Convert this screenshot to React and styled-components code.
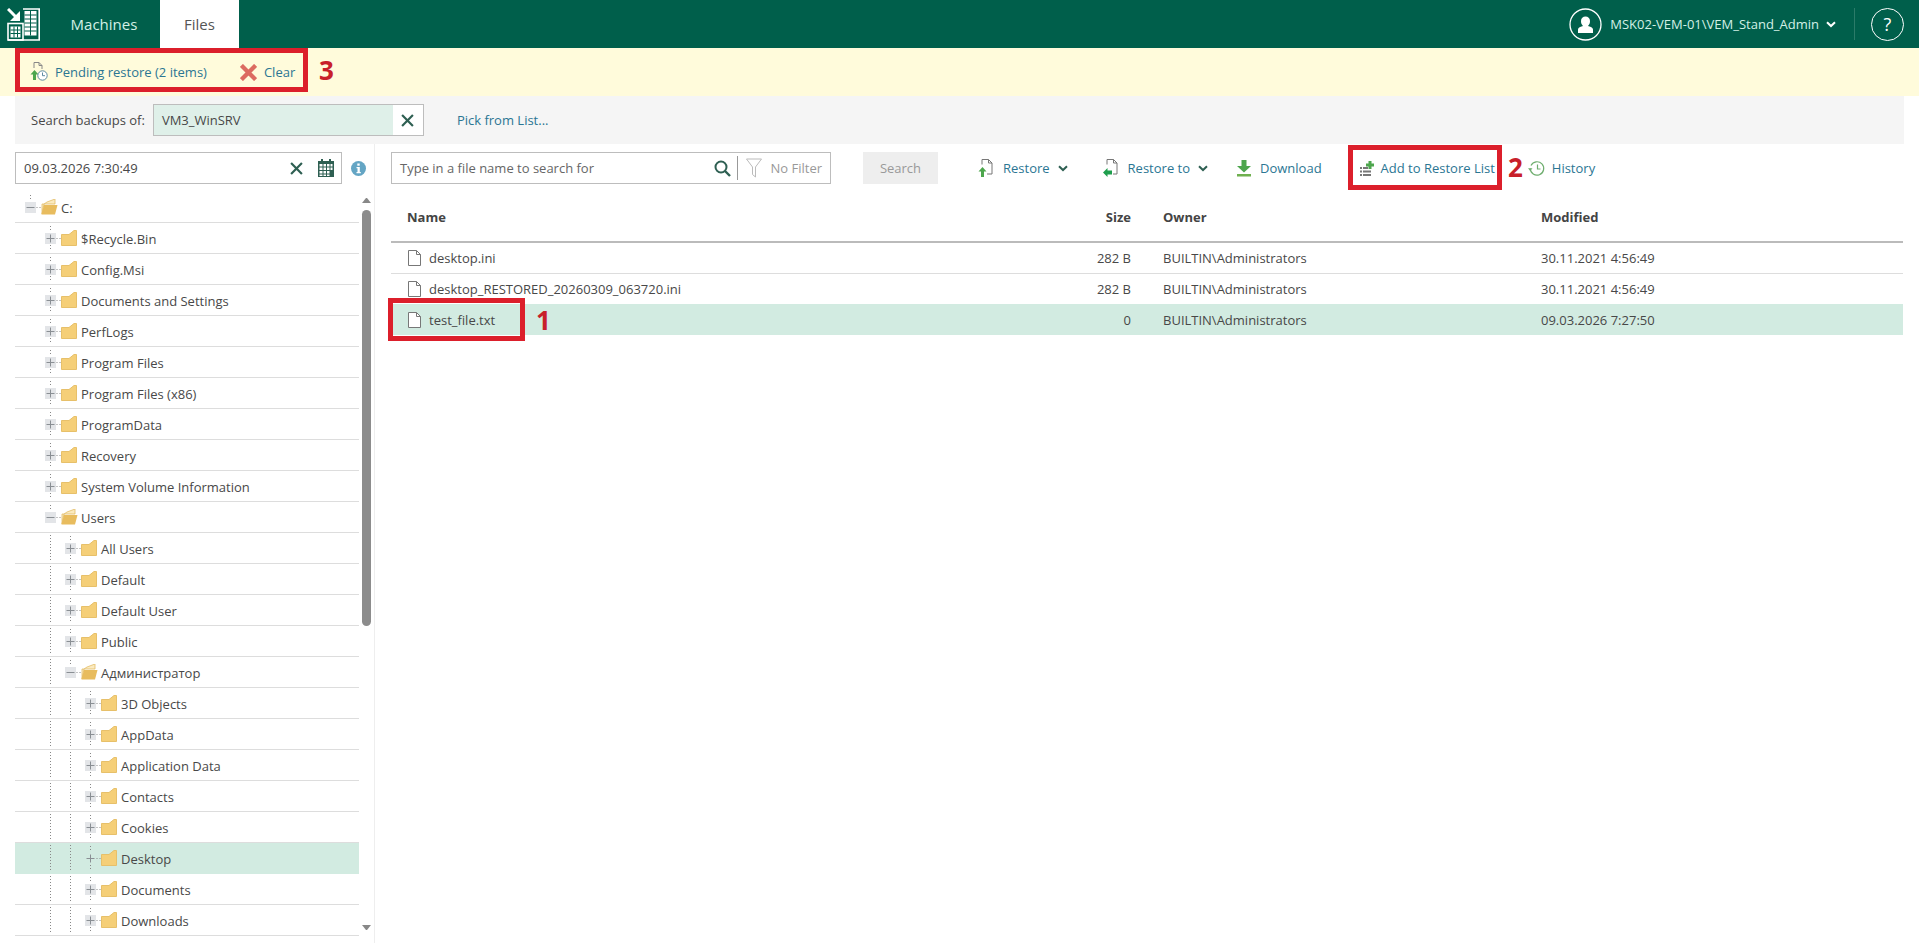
import React from 'react'
import styled, { createGlobalStyle } from 'styled-components'

const GlobalStyle = createGlobalStyle`
  html, body { margin: 0; padding: 0; background: #fff; overflow: hidden; }
  * { box-sizing: border-box; }
  body { font-family: "Open Sans", "Liberation Sans", sans-serif; font-size: 13px; color: #484848; }
`

const treeRows = [
  { name: 'C:', depth: 0, open: true },
  { name: '$Recycle.Bin', depth: 1 },
  { name: 'Config.Msi', depth: 1 },
  { name: 'Documents and Settings', depth: 1 },
  { name: 'PerfLogs', depth: 1 },
  { name: 'Program Files', depth: 1 },
  { name: 'Program Files (x86)', depth: 1 },
  { name: 'ProgramData', depth: 1 },
  { name: 'Recovery', depth: 1 },
  { name: 'System Volume Information', depth: 1 },
  { name: 'Users', depth: 1, open: true },
  { name: 'All Users', depth: 2 },
  { name: 'Default', depth: 2 },
  { name: 'Default User', depth: 2 },
  { name: 'Public', depth: 2 },
  { name: 'Администратор', depth: 2, open: true },
  { name: '3D Objects', depth: 3 },
  { name: 'AppData', depth: 3 },
  { name: 'Application Data', depth: 3 },
  { name: 'Contacts', depth: 3 },
  { name: 'Cookies', depth: 3 },
  { name: 'Desktop', depth: 3, selected: true },
  { name: 'Documents', depth: 3 },
  { name: 'Downloads', depth: 3 },
]

const files = [
  { name: 'desktop.ini', size: '282 B', owner: 'BUILTIN\\Administrators', modified: '30.11.2021 4:56:49' },
  { name: 'desktop_RESTORED_20260309_063720.ini', size: '282 B', owner: 'BUILTIN\\Administrators', modified: '30.11.2021 4:56:49' },
  { name: 'test_file.txt', size: '0', owner: 'BUILTIN\\Administrators', modified: '09.03.2026 7:27:50', selected: true },
]

/* icons */
const Logo = () => (
  <svg width="33" height="33" viewBox="0 0 33 33" fill="none" stroke="#fff">
    <path d="M1 1l10 10" strokeWidth="3" />
    <path d="M13 3v10H3z" fill="#fff" stroke="none" />
    <path d="M16 1h16.200v31H1" strokeWidth="1.600" />
    <rect x="17.500" y="3" width="12" height="24.500" fill="#fff" stroke="none" />
    <path d="M17.500 7h12M17.500 11h12M17.500 15h12M17.500 19h12M17.500 23h12M23.500 3v24.500" stroke="#005f4b" />
    <rect x="1" y="15.500" width="15" height="16.500" stroke="#fff" strokeWidth="1.600" />
    <rect x="3.500" y="18.500" width="10" height="11" fill="#fff" stroke="none" />
    <path d="M3.500 22h10M3.500 25.500h10M7 18.500v11M10.500 18.500v11" stroke="#005f4b" />
  </svg>
)

const Chevron = ({ color = '#2e5f52' }) => (
  <svg width="10" height="7" viewBox="0 0 10 7" fill="none">
    <path d="M1 1.200 5 5l4-3.800" stroke={color} strokeWidth="2" />
  </svg>
)

const UserIcon = () => (
  <svg width="33" height="33" viewBox="0 0 33 33" fill="none">
    <circle cx="16.500" cy="16.500" r="15.500" stroke="#fff" strokeWidth="1.300" />
    <path d="M9 25v-3.500c0-1.500 1.500-2.500 5-3.500-1.500-1.500-2-3-2-5 0-3 2-4.500 4.500-4.500S21 10 21 13c0 2-.5 3.500-2 5 3.500 1 5 2 5 3.500V25z" fill="#fff" />
  </svg>
)

const CloseIcon = ({ size = 12, color = '#2e5f52', width = 2 }) => (
  <svg width={size} height={size} viewBox="0 0 12 12" fill="none">
    <path d="M1 1l10 10M11 1 1 11" stroke={color} strokeWidth={width} />
  </svg>
)

const PageOutline = ({ stroke = '#777', d = 'M3.500 10V.500h7l3 3v11H8' }) => (
  <path d={d} fill="none" stroke={stroke} />
)

const PendingIcon = () => (
  <svg width="18" height="20" viewBox="0 0 18 20" fill="none">
    <path d="M4 6V.500h5l3 3V7M9 .500v3h3" stroke="#888" />
    <path d="M4.500 8 .500 12.500H3V18h3v-5.500h2.500z" fill="#4da64d" />
    <circle cx="12.500" cy="13.500" r="4.700" fill="#fff" stroke="#5c8aa0" />
    <path d="M12.500 10.500v3.200h2.500" stroke="#5c8aa0" />
  </svg>
)

const RestoreIcon = () => (
  <svg width="16" height="18" viewBox="0 0 16 18">
    <PageOutline d="M4 5.500V.500h6.500l3.500 3.500v11H9M10.500.500V4H14" />
    <path d="M4.500 8 .500 12.500h2.500V18h3v-5.500h2.500z" fill="#4da64d" />
  </svg>
)

const RestoreToIcon = () => (
  <svg width="16" height="18" viewBox="0 0 16 18">
    <PageOutline d="M4 5.500V.500h6.500l3.500 3.500v11H10M10.500.500V4H14" />
    <path d="M0 13.500 4.500 9v2.500H9v4H4.500V18z" fill="#1f9e4d" />
  </svg>
)

const DownloadIcon = () => (
  <svg width="16" height="18" viewBox="0 0 16 18">
    <path d="M5.500 1h5v6h4.500L8 13.500 1 7h4.500z" fill="#4da64d" />
    <rect x="1" y="15" width="14" height="2.500" fill="#6fb04f" />
  </svg>
)

const AddListIcon = () => (
  <svg width="15" height="15" viewBox="0 0 15 15">
    <path d="M1 6h2v2H1zM1 9.500h2v2H1zM1 13h2v2H1zM4 6h5v2H4zM4 9.500h8v2H4zM4 13h8v2H4z" fill="#777" />
    <path d="M9.500 0h3v2.500H15v3h-2.500V8h-3V5.500H7v-3h2.500z" fill="#4da64d" />
  </svg>
)

const HistoryIcon = () => (
  <svg width="17" height="17" viewBox="0 0 17 17" fill="none">
    <path d="M3 5.500a6.700 6.700 0 1 1-.700 3" stroke="#6fae6f" strokeWidth="1.200" />
    <path d="M0 8.300h4.500L2.200 11z" fill="#6fae6f" />
    <path d="M9.500 4.500v4.500h3" stroke="#6fae6f" strokeWidth="1.200" />
  </svg>
)

const SearchIcon = () => (
  <svg width="17" height="17" viewBox="0 0 17 17" fill="none">
    <circle cx="7" cy="7" r="5.500" stroke="#2e5f52" strokeWidth="2" />
    <path d="M11 11l5 5" stroke="#2e5f52" strokeWidth="2.400" />
  </svg>
)

const FunnelIcon = () => (
  <svg width="16" height="20" viewBox="0 0 16 20" fill="none">
    <path d="M.500 1h15L9.500 9v10l-3-2.500V9z" stroke="#bbb" />
  </svg>
)

const CalendarIcon = () => (
  <svg width="16" height="18" viewBox="0 0 16 18">
    <path d="M3 0h2v3H3zM11 0h2v3h-2z" fill="#2e5f52" />
    <path d="M0 2h16v16H0z" fill="#2e5f52" />
    <path d="M1.500 5h3v2.500h-3zM5.500 5h2.500v2.500H5.500zM9 5h2.500v2.500H9zM12.500 5h2v2.500h-2zM1.500 8.500h3V11h-3zM5.500 8.500h2.500V11H5.500zM9 8.500h2.500V11H9zM12.500 8.500h2V11h-2zM1.500 12h3v2.500h-3zM5.500 12h2.500v2.500H5.500zM9 12h2.500v2.500H9zM1.500 15.500h3v1.500h-3zM5.500 15.500h2.500v1.500H5.500zM9 15.500h2.500v1.500H9z" fill="#fff" />
  </svg>
)

const InfoIcon = () => (
  <svg width="15" height="15" viewBox="0 0 15 15">
    <circle cx="7.500" cy="7.500" r="7.500" fill="#64a5c4" />
    <rect x="6.300" y="2.500" width="2.400" height="2.200" fill="#fff" />
    <path d="M5.500 6h3.300v5h1v1.300H5.500V11h1V7.300h-1z" fill="#fff" />
  </svg>
)

const FileIcon = () => (
  <svg width="13" height="16" viewBox="0 0 13 16" fill="none">
    <path d="M.500.500h8l4 4v11H.500z" stroke="#777" fill="#fff" />
    <path d="M8.500.500v4h4" stroke="#777" />
  </svg>
)

const Expander = ({ open, selected }) => (
  <svg width="16" height="27" viewBox="0 0 16 27" fill="none">
    {!selected && <rect x="0" y="8" width="11" height="11" fill="#e3e5e8" />}
    <path d="M5.500 1v6M11.500 13.500H16" stroke="#888" strokeDasharray="1 2" />
    {!open && <path d="M5.500 20v6" stroke="#888" strokeDasharray="1 2" />}
    <path d={open ? 'M1.500 13.500h8' : 'M1.500 13.500h8M5.500 9.500v8'} stroke="#8a8f94" />
  </svg>
)

const Folder = ({ open }) =>
  open ? (
    <svg width="17" height="16" viewBox="0 0 17 16">
      <path d="M1 15V5h2l3-2 8-3v5H3z" fill="#fbeabf" stroke="#e2bd68" strokeWidth=".8" />
      <path d="M.500 15.500 3 6h13.500L14 15.500z" fill="#e8bc5e" />
    </svg>
  ) : (
    <svg width="16" height="16" viewBox="0 0 16 16">
      <path d="M.500 15.500V4.500H8L13 .500h2.500v15z" fill="#f5cf78" stroke="#e7c06a" />
    </svg>
  )

/* layout */
const Page = styled.div`
  position: relative;
  width: 1919px;
  height: 943px;
  overflow: hidden;
  background: #fff;
`

const TopBar = styled.header`
  display: flex;
  align-items: stretch;
  height: 48px;
  background: #005f4b;
  padding-left: 7px;
`

const LogoBox = styled.div`
  display: flex;
  align-items: center;
  width: 47px;
`

const Tab = styled.div`
  display: flex;
  align-items: center;
  justify-content: center;
  width: ${(p) => p.$width}px;
  margin-left: ${(p) => p.$ml || 0}px;
  font-size: 15px;
  color: ${(p) => (p.$active ? '#555' : '#d3f0e6')};
  background: ${(p) => (p.$active ? '#fff' : 'transparent')};
`

const UserArea = styled.div`
  display: flex;
  align-items: center;
  margin-left: auto;
  padding-right: 15px;
  color: #d3f0e6;
  font-size: 13px;
`

const UserName = styled.span`
  margin: 0 7px 0 8px;
  white-space: nowrap;
`

const HeaderDivider = styled.div`
  width: 1px;
  height: 32px;
  background: #2b7b69;
  margin: 0 16px 0 18px;
`

const HelpCircle = styled.div`
  display: flex;
  align-items: center;
  justify-content: center;
  width: 33px;
  height: 33px;
  border: 1.300px solid #fff;
  border-radius: 50%;
  color: #fff;
  font-size: 18px;
`

const PendingBar = styled.div`
  display: flex;
  align-items: center;
  height: 48px;
  padding: 0 0 0 30px;
  background: #fffbdb;
`

const LinkText = styled.span`
  color: #2b7693;
  white-space: nowrap;
`

const PendingLink = styled.div`
  display: flex;
  align-items: center;
  gap: ${(p) => p.$gap}px;
  margin-left: ${(p) => p.$ml || 0}px;
`

const SearchStrip = styled.div`
  display: flex;
  align-items: center;
  height: 48px;
  margin: 0 15px;
  padding: 0 0 0 16px;
  background: #f5f5f5;
`

const StripLabel = styled.span`
  margin-right: 8px;
  white-space: nowrap;
`

const SelectedInput = styled.div`
  display: flex;
  width: 271px;
  height: 32px;
  border: 1px solid #bdbdbd;
  background: #fff;
  margin-right: 33px;
`

const SelectedValue = styled.div`
  flex: 1;
  display: flex;
  align-items: center;
  padding-left: 8px;
  background: #dff0e9;
`

const ClearBox = styled.div`
  display: flex;
  align-items: center;
  justify-content: center;
  width: 30px;
`

const Body = styled.div`
  display: flex;
  padding-left: 15px;
`

const Sidebar = styled.aside`
  width: 360px;
  height: 799px;
  border-right: 1px solid #eee;
  overflow: hidden;
`

const DateRow = styled.div`
  display: flex;
  align-items: center;
  padding-top: 8px;
`

const TextField = styled.div`
  display: flex;
  align-items: center;
  width: ${(p) => p.$width}px;
  height: 32px;
  border: 1px solid #bdbdbd;
  background: #fff;
  padding-left: 8px;
`

const DateValue = styled.span`
  flex: 1;
`

const DateAction = styled.span`
  display: flex;
  align-items: center;
  margin-right: ${(p) => p.$mr}px;
`

const InfoBox = styled.span`
  display: flex;
  margin-left: 9px;
`

const TreeWrap = styled.div`
  display: flex;
  padding-top: 8px;
`

const Tree = styled.div`
  width: 344px;
`

const TreeRow = styled.div`
  display: flex;
  align-items: stretch;
  height: 31px;
  padding-left: 10px;
  border-bottom: 1px solid #ddd;
  background: ${(p) => (p.$selected ? '#d2ebe1' : 'transparent')};
  ${(p) => p.$selected && 'border-bottom-color: #d2ebe1;'}
`

const Indent = styled.span`
  flex: none;
  width: 20px;
  margin: 2px 0;
  ${(p) => p.$guide && 'background: repeating-linear-gradient(to bottom, #888 0 1px, transparent 1px 3px) 5px 0 / 1px 100% no-repeat;'}
`

const Node = styled.span`
  display: flex;
  align-items: center;
  gap: 0;
`

const NodeLabel = styled.span`
  margin-left: ${(p) => (p.$open ? 3 : 4)}px;
  padding-top: 1px;
  white-space: nowrap;
`

const ScrollTrack = styled.div`
  display: flex;
  flex-direction: column;
  align-items: center;
  width: 9px;
  margin-left: 3px;
`

const ArrowUp = styled.div`
  flex: none;
  width: 9px;
  height: 5px;
  margin-top: 6px;
  border-left: 4.500px solid transparent;
  border-right: 4.500px solid transparent;
  border-bottom: 5px solid #888;
`

const ArrowDown = styled.div`
  flex: none;
  width: 9px;
  height: 5px;
  margin-top: 299px;
  border-left: 4.500px solid transparent;
  border-right: 4.500px solid transparent;
  border-top: 5px solid #888;
`

const Thumb = styled.div`
  flex: none;
  width: 9px;
  height: 416px;
  margin-top: 7px;
  border-radius: 5px;
  background: #8c8c8c;
`

const Main = styled.main`
  width: 1528px;
  padding-left: 16px;
`

const Toolbar = styled.div`
  display: flex;
  align-items: center;
  padding-top: 8px;
`

const SearchField = styled(TextField)`
  padding-right: 8px;
`

const Placeholder = styled.span`
  flex: 1;
  color: #666;
`

const FieldDivider = styled.span`
  width: 1px;
  height: 24px;
  margin: 0 8px 0 6px;
  background: #999;
`

const FilterText = styled.span`
  margin-left: 8px;
  color: #999;
  white-space: nowrap;
`

const SearchButton = styled.div`
  display: flex;
  align-items: center;
  justify-content: center;
  width: 75px;
  height: 32px;
  margin-left: 32px;
  background: #eee;
  color: #999;
`

const ToolButton = styled.div`
  display: flex;
  align-items: center;
  margin-left: ${(p) => p.$ml}px;
`

const ToolLabel = styled(LinkText)`
  margin-left: ${(p) => p.$gap}px;
`

const ChevronBox = styled.span`
  display: flex;
  margin-left: 8px;
`

const Grid = styled.div`
  display: grid;
  grid-template-columns: 640px 100px 410px 1fr;
  align-items: center;
`

const HeadRow = styled(Grid)`
  height: 59px;
  padding-top: 8px;
  border-bottom: 2px solid #bbb;
  font-weight: 700;
  color: #444;
`

const FileRow = styled(Grid)`
  height: 31px;
  border-bottom: 1px solid ${(p) => (p.$selected ? '#d2ebe1' : '#ddd')};
  background: ${(p) => (p.$selected ? '#d2ebe1' : 'transparent')};
  margin-top: ${(p) => (p.$selected ? -1 : 0)}px;
  padding-top: ${(p) => (p.$selected ? 2 : 0)}px;
`

const NameCell = styled.div`
  display: flex;
  align-items: center;
  gap: 8px;
  padding-left: ${(p) => p.$pad}px;
  white-space: nowrap;
`

const SizeCell = styled.div`
  text-align: right;
`

const OwnerCell = styled.div`
  padding-left: 32px;
`

/* red marks drawn over the screenshot */
const MarkBox = styled.div`
  position: absolute;
  left: ${(p) => p.$x}px;
  top: ${(p) => p.$y}px;
  width: ${(p) => p.$w}px;
  height: ${(p) => p.$h}px;
  border: 5px solid #dc1f2b;
`

const MarkNumber = styled.span`
  position: absolute;
  left: ${(p) => p.$x}px;
  top: ${(p) => p.$y}px;
  font-size: 26px;
  line-height: 30px;
  font-weight: 700;
  color: #c8202a;
`

function guidesFor(depth) {
  const cells = []
  for (let i = 0; i < depth; i++) cells.push(i > 0)
  return cells
}

export default function App() {
  return (
    <Page>
      <GlobalStyle />
      <TopBar>
        <LogoBox><Logo /></LogoBox>
        <Tab $width={100}>Machines</Tab>
        <Tab $width={79} $ml={6} $active>Files</Tab>
        <UserArea>
          <UserIcon />
          <UserName>MSK02-VEM-01\VEM_Stand_Admin</UserName>
          <Chevron color="#fff" />
          <HeaderDivider />
          <HelpCircle>?</HelpCircle>
        </UserArea>
      </TopBar>

      <PendingBar>
        <PendingLink $gap={7}><PendingIcon /><LinkText>Pending restore (2 items)</LinkText></PendingLink>
        <PendingLink $gap={7} $ml={33}>
          <CloseIcon size={17} color="#dc6b60" width={3} />
          <LinkText>Clear</LinkText>
        </PendingLink>
      </PendingBar>

      <SearchStrip>
        <StripLabel>Search backups of:</StripLabel>
        <SelectedInput>
          <SelectedValue>VM3_WinSRV</SelectedValue>
          <ClearBox><CloseIcon size={13} /></ClearBox>
        </SelectedInput>
        <LinkText>Pick from List...</LinkText>
      </SearchStrip>

      <Body>
        <Sidebar>
          <DateRow>
            <TextField $width={327}>
              <DateValue>09.03.2026 7:30:49</DateValue>
              <DateAction $mr={15}><CloseIcon size={13} /></DateAction>
              <DateAction $mr={7}><CalendarIcon /></DateAction>
            </TextField>
            <InfoBox><InfoIcon /></InfoBox>
          </DateRow>
          <TreeWrap>
            <Tree>
              {treeRows.map((row) => (
                <TreeRow key={row.name + row.depth} $selected={row.selected}>
                  {guidesFor(row.depth).map((guide, i) => (
                    <Indent key={i} $guide={guide} />
                  ))}
                  <Node>
                    <Expander open={row.open} selected={row.selected} />
                    <Folder open={row.open} />
                    <NodeLabel $open={row.open}>{row.name}</NodeLabel>
                  </Node>
                </TreeRow>
              ))}
            </Tree>
            <ScrollTrack>
              <ArrowUp />
              <Thumb />
              <ArrowDown />
            </ScrollTrack>
          </TreeWrap>
        </Sidebar>

        <Main>
          <Toolbar>
            <SearchField $width={440}>
              <Placeholder>Type in a file name to search for</Placeholder>
              <SearchIcon />
              <FieldDivider />
              <FunnelIcon />
              <FilterText>No Filter</FilterText>
            </SearchField>
            <SearchButton>Search</SearchButton>
            <ToolButton $ml={40}>
              <RestoreIcon /><ToolLabel $gap={9}>Restore</ToolLabel>
              <ChevronBox><Chevron /></ChevronBox>
            </ToolButton>
            <ToolButton $ml={35}>
              <RestoreToIcon /><ToolLabel $gap={9}>Restore to</ToolLabel>
              <ChevronBox><Chevron /></ChevronBox>
            </ToolButton>
            <ToolButton $ml={28}>
              <DownloadIcon /><ToolLabel $gap={8}>Download</ToolLabel>
            </ToolButton>
            <ToolButton $ml={37}>
              <AddListIcon /><ToolLabel $gap={7}>Add to Restore List</ToolLabel>
            </ToolButton>
            <ToolButton $ml={33}>
              <HistoryIcon /><ToolLabel $gap={7}>History</ToolLabel>
            </ToolButton>
          </Toolbar>

          <HeadRow>
            <NameCell $pad={16}>Name</NameCell>
            <SizeCell>Size</SizeCell>
            <OwnerCell>Owner</OwnerCell>
            <div>Modified</div>
          </HeadRow>
          {files.map((file) => (
            <FileRow key={file.name} $selected={file.selected}>
              <NameCell $pad={17}><FileIcon />{file.name}</NameCell>
              <SizeCell>{file.size}</SizeCell>
              <OwnerCell>{file.owner}</OwnerCell>
              <div>{file.modified}</div>
            </FileRow>
          ))}
        </Main>
      </Body>

      <MarkBox $x={15} $y={48} $w={293} $h={44} />
      <MarkNumber $x={319} $y={55}>3</MarkNumber>
      <MarkBox $x={1348} $y={145} $w={154} $h={45} />
      <MarkNumber $x={1508} $y={152}>2</MarkNumber>
      <MarkBox $x={388} $y={298} $w={137} $h={43} />
      <MarkNumber $x={536} $y={305}>1</MarkNumber>
    </Page>
  )
}
